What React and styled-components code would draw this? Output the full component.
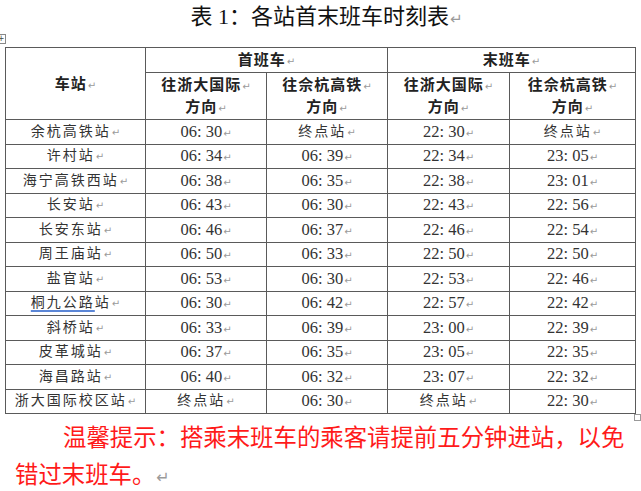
import React from "react"
import styled, { createGlobalStyle } from "styled-components"

const GlobalStyle = createGlobalStyle`
    html, body {
        margin: 0;
        padding: 0;
        background: #ffffff;
    }
    body {
        font-family: "Liberation Serif", "Noto Sans CJK SC", serif;
    }
`

const CJK = `"Liberation Serif", "Noto Sans CJK SC", serif`

const Page = styled.div`
    width: 641px;
    height: 491px;
    overflow: hidden;
    background: #fff;
`

const Title = styled.h1`
    margin: 0;
    padding-top: 3px;
    height: 44px;
    box-sizing: border-box;
    text-align: center;
    font-family: ${CJK};
    font-size: 22px;
    font-weight: 400;
    color: #111;
    line-height: 28px;
    padding-left: 12px;
`

const Mark = styled.span`
    font-family: "DejaVu Sans", sans-serif;
    font-size: ${(p) => p.$size || 10}px;
    font-weight: 400;
    line-height: 0;
    color: #9a9a9a;
    letter-spacing: 0;
    margin-left: 1px;
`

const TableBox = styled.div`
    position: relative;
    margin-left: 5px;
    margin-top: 3px;
    width: 630px;
`

const MoveHandle = styled.div`
    position: absolute;
    left: -9px;
    top: -13px;
    width: 8px;
    height: 8px;
    border: 1px solid #888;
    background: #fff;
    display: flex;
    align-items: center;
    justify-content: center;
    font-family: "DejaVu Sans", sans-serif;
    font-size: 8px;
    line-height: 8px;
    color: #444;
`

const ResizeHandle = styled.div`
    position: absolute;
    right: -6px;
    bottom: -7px;
    width: 5px;
    height: 5px;
    border: 1px solid #999;
    background: #fff;
`

const Table = styled.table`
    border-collapse: collapse;
    table-layout: fixed;
    width: 630px;
    color: #333;
`

const Col = styled.col`
    width: ${(p) => p.$w}px;
`

const HeadRow = styled.tr`
    height: ${(p) => p.$h}px;
`

const HeadCell = styled.th`
    border: 1px solid #5a5a5a;
    padding: 0;
    text-align: center;
    vertical-align: middle;
    font-family: ${CJK};
    font-size: 15px;
    font-weight: 700;
    letter-spacing: 1px;
    line-height: 22px;
    color: #222;
`

const Row = styled.tr`
    height: 24.5px;
`

const Cell = styled.td`
    border: 1px solid #5a5a5a;
    padding: 0;
    text-align: center;
    vertical-align: middle;
    font-family: ${CJK};
    font-size: ${(p) => (p.$num ? 16.5 : 14)}px;
    letter-spacing: ${(p) => (p.$num ? 0 : 2)}px;
    line-height: 18px;
    color: #333;
    white-space: nowrap;
`

const Squiggle = styled.span`
    text-decoration: underline;
    text-decoration-color: #5b86d6;
    text-decoration-thickness: 1.5px;
    text-underline-offset: 3px;
`

const Note = styled.p`
    margin: 4px 0 0 0;
    padding-left: 15px;
    width: 620px;
    font-family: "Noto Sans CJK SC", sans-serif;
    font-size: 23.4px;
    line-height: 37px;
    text-indent: 48px;
    color: #ff1a1a;
`

const rows = [
    ["余杭高铁站", "06: 30", "终点站", "22: 30", "终点站"],
    ["许村站", "06: 34", "06: 39", "22: 34", "23: 05"],
    ["海宁高铁西站", "06: 38", "06: 35", "22: 38", "23: 01"],
    ["长安站", "06: 43", "06: 30", "22: 43", "22: 56"],
    ["长安东站", "06: 46", "06: 37", "22: 46", "22: 54"],
    ["周王庙站", "06: 50", "06: 33", "22: 50", "22: 50"],
    ["盐官站", "06: 53", "06: 30", "22: 53", "22: 46"],
    ["桐九公路站", "06: 30", "06: 42", "22: 57", "22: 42"],
    ["斜桥站", "06: 33", "06: 39", "23: 00", "22: 39"],
    ["皮革城站", "06: 37", "06: 35", "23: 05", "22: 35"],
    ["海昌路站", "06: 40", "06: 32", "23: 07", "22: 32"],
    ["浙大国际校区站", "终点站", "06: 30", "终点站", "22: 30"],
]

const P = () => <Mark>↵</Mark>

function StationName({ name }) {
    if (name === "桐九公路站") {
        return (
            <>
                <Squiggle>桐九公路</Squiggle>站
            </>
        )
    }
    return name
}

export default function App() {
    return (
        <Page>
            <GlobalStyle />
            <Title>
                表 1：各站首末班车时刻表<Mark $size={15}>↵</Mark>
            </Title>

            <TableBox>
                <MoveHandle>+</MoveHandle>
                <Table>
                    <colgroup>
                        <Col $w={140} />
                        <Col $w={121} />
                        <Col $w={121} />
                        <Col $w={122} />
                        <Col $w={126} />
                    </colgroup>
                    <thead>
                        <HeadRow $h={25}>
                            <HeadCell rowSpan={2}>车站<P /></HeadCell>
                            <HeadCell colSpan={2}>首班车<P /></HeadCell>
                            <HeadCell colSpan={2}>末班车<P /></HeadCell>
                        </HeadRow>
                        <HeadRow $h={47}>
                            <HeadCell>往浙大国际<P /><br />方向<P /></HeadCell>
                            <HeadCell>往佘杭高铁<P /><br />方向<P /></HeadCell>
                            <HeadCell>往浙大国际<P /><br />方向<P /></HeadCell>
                            <HeadCell>往佘杭高铁<P /><br />方向<P /></HeadCell>
                        </HeadRow>
                    </thead>
                    <tbody>
                        {rows.map((r) => (
                            <Row key={r[0]}>
                                <Cell><StationName name={r[0]} /><P /></Cell>
                                {r.slice(1).map((v, i) => (
                                    <Cell key={i} $num={v.includes(":")}>
                                        {v}<P />
                                    </Cell>
                                ))}
                            </Row>
                        ))}
                    </tbody>
                </Table>
                <ResizeHandle />
            </TableBox>

            <Note>
                温馨提示：搭乘末班车的乘客请提前五分钟进站，以免错过末班车。<Mark $size={16}>↵</Mark>
            </Note>
        </Page>
    )
}
